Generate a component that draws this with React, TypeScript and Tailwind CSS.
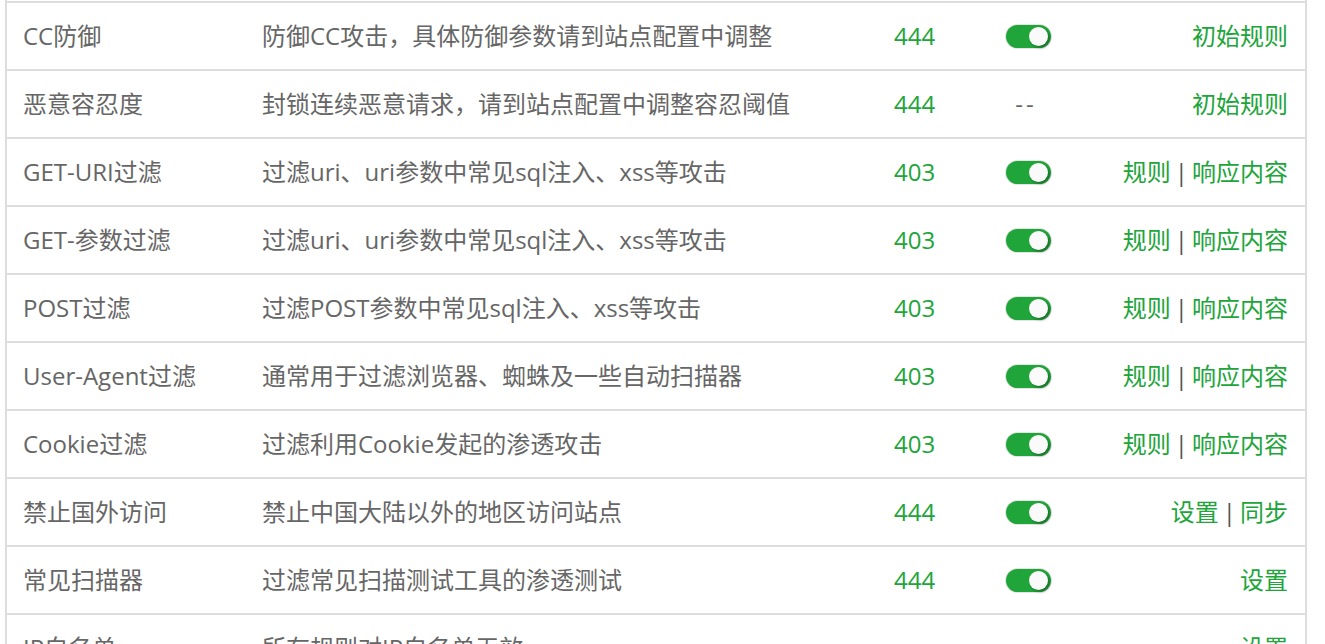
const rows: {
  name: string;
  desc: string;
  code: string;
  toggle: boolean;
  actions: string[];
}[] = [
  { name: "CC防御", desc: "防御CC攻击，具体防御参数请到站点配置中调整", code: "444", toggle: true, actions: ["初始规则"] },
  { name: "恶意容忍度", desc: "封锁连续恶意请求，请到站点配置中调整容忍阈值", code: "444", toggle: false, actions: ["初始规则"] },
  { name: "GET-URI过滤", desc: "过滤uri、uri参数中常见sql注入、xss等攻击", code: "403", toggle: true, actions: ["规则", "响应内容"] },
  { name: "GET-参数过滤", desc: "过滤uri、uri参数中常见sql注入、xss等攻击", code: "403", toggle: true, actions: ["规则", "响应内容"] },
  { name: "POST过滤", desc: "过滤POST参数中常见sql注入、xss等攻击", code: "403", toggle: true, actions: ["规则", "响应内容"] },
  { name: "User-Agent过滤", desc: "通常用于过滤浏览器、蜘蛛及一些自动扫描器", code: "403", toggle: true, actions: ["规则", "响应内容"] },
  { name: "Cookie过滤", desc: "过滤利用Cookie发起的渗透攻击", code: "403", toggle: true, actions: ["规则", "响应内容"] },
  { name: "禁止国外访问", desc: "禁止中国大陆以外的地区访问站点", code: "444", toggle: true, actions: ["设置", "同步"] },
  { name: "常见扫描器", desc: "过滤常见扫描测试工具的渗透测试", code: "444", toggle: true, actions: ["设置"] },
  { name: "IP白名单", desc: "所有规则对IP白名单无效", code: "", toggle: false, actions: ["设置"] },
];

function Toggle() {
  return (
    <div className="relative w-[45px] h-[23px] rounded-full bg-[#20a53a] shadow-[0_0_0_1px_#e4e4e4]">
      <div className="absolute right-[3px] top-[2px] w-[19px] h-[19px] rounded-full bg-[#fafafa] shadow-[2px_2px_3px_rgba(0,0,0,0.3)]" />
    </div>
  );
}

export default function App() {
  return (
    <div
      className="h-[644px] overflow-hidden bg-white text-[24px] text-[#666]"
      style={{ fontFamily: '"Open Sans", "Noto Sans CJK SC", sans-serif' }}
    >
      <div className="ml-[5px] w-[1302px] border-x-2 border-[#ddd] pt-px">
        {rows.map((r) => (
          <div
            key={r.name}
            className="grid grid-cols-[239px_632px_112px_74px_1fr] items-center h-[68px] border-t-2 border-[#ddd] leading-none"
          >
            <div className="pl-4 whitespace-nowrap">{r.name}</div>
            <div className="pl-4 whitespace-nowrap">{r.desc}</div>
            <div className="pl-4 text-[#20a53a]">{r.code}</div>
            <div className="flex justify-center pl-[2px]">
              {r.toggle ? (
                <Toggle />
              ) : r.code ? (
                <span className="text-[#666] tracking-[3px] pr-[4px]">--</span>
              ) : null}
            </div>
            <div className="pr-[17px] text-right whitespace-nowrap text-[#20a53a]">
              {r.actions.map((a, i) => (
                <span key={a}>
                  {i > 0 && <span className="text-[#555] mx-[4px]">|</span>}
                  {a}
                </span>
              ))}
            </div>
          </div>
        ))}
      </div>
    </div>
  );
}
